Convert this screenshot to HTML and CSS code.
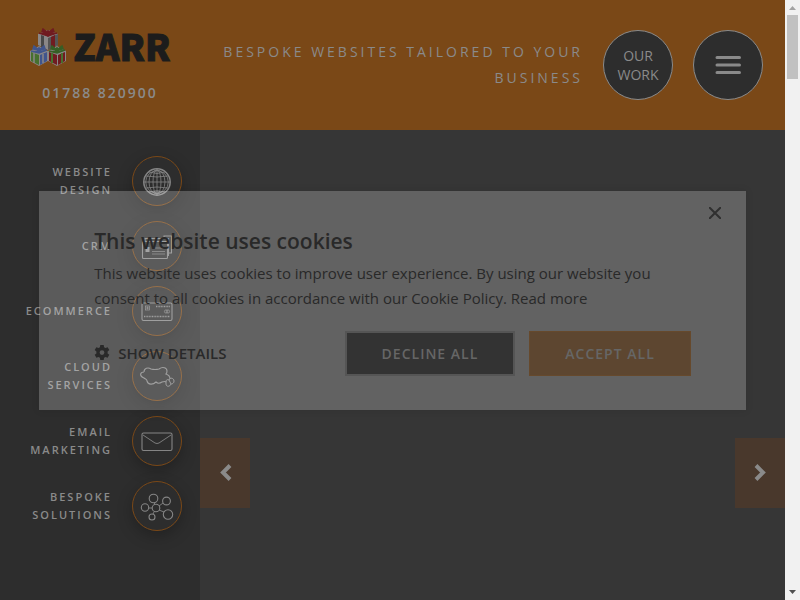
FILE: index.html
```html
<!DOCTYPE html>
<html lang="en">
<head>
  <meta charset="utf-8">
  <title>Zarr - Bespoke Websites</title>
  <link rel="stylesheet" href="styles.css">
</head>
<body>
  <div class="page">
    <header class="header">
      <div class="brand">
        <a class="logo" href="#" aria-label="Zarr home">
          <svg class="logo-gifts" width="38" height="40" viewBox="0 0 38 40">
            <!-- top box -->
            <path d="M9 6l10-4 10 4v11l-10 5-10-5z" fill="#8a8787"/>
            <path d="M19 10l10-4v11l-10 5z" fill="#555"/>
            <path d="M12 7l3 1v12l-3-1z" fill="#484848"/>
            <path d="M22 9l4-2v12l-4 2z" fill="#701b20"/>
            <path d="M10 5l9 3 9-3M19 2v7M19 5l-5-4-1 3zM19 5l5-4 1 3z" fill="#701b20" stroke="#701b20" stroke-width="1.5"/>
            <!-- left box -->
            <path d="M1 23l9-5 9 5v10l-9 5-9-5z" fill="#8a8787"/>
            <path d="M2 24l8 3v10l-8-4z" fill="#46702e"/>
            <path d="M11 27l7-3v9l-7 4z" fill="#40558c"/>
            <path d="M5 25v10M14 26v9" stroke="#8a8787" stroke-width="1.5"/>
            <path d="M2 23l8 2 8-3M10 19v6M10 22l-5-4-1 3zM10 22l5-4 1 3z" fill="#40558c" stroke="#40558c" stroke-width="1.5"/>
            <!-- right box -->
            <path d="M19 23l9-5 9 5v10l-9 5-9-5z" fill="#8a8787"/>
            <path d="M20 24l8 3v10l-8-4z" fill="#701b20"/>
            <path d="M29 27l7-3v9l-7 4z" fill="#701b20"/>
            <path d="M23 25v10M33 25v10" stroke="#46702e" stroke-width="2"/>
            <path d="M20 23l8 2 8-3M28 19v6M28 22l-5-4-1 3zM28 22l5-4 1 3z" fill="#365f25" stroke="#365f25" stroke-width="1.5"/>
          </svg>
          <span class="logo-text">ZARR</span>
        </a>
        <a class="phone" href="tel:01788820900">01788 820900</a>
      </div>
      <p class="tagline">Bespoke websites tailored to your business</p>
      <a class="round" href="#">OUR WORK</a>
      <button class="round" type="button" aria-label="Menu">
        <svg width="26" height="20" viewBox="0 0 26 20" stroke="#8a8a8a" stroke-width="3" stroke-linecap="round">
          <path d="M2 2.500h22.500M2 10h22.500M2 17.500h22.500"/>
        </svg>
      </button>
    </header>

    <div class="content">
      <nav class="sidebar">
        <a class="service" href="#">
          <span class="service-name">Website Design</span>
          <span class="service-icon">
            <svg width="36" height="36" viewBox="0 0 36 36">
              <circle cx="18" cy="19" r="13.2" stroke-width="1.5"/>
              <g stroke-width=".8">
                <circle cx="18" cy="19" r="11.3"/>
                <ellipse cx="18" cy="19" rx="8" ry="12"/>
                <ellipse cx="18" cy="19" rx="4" ry="12"/>
                <path d="M18 6v26M5 19h26M7 13q11 2 22 0M7 25q11-2 22 0M10 9q8 3 16 0M10 29q8-3 16 0"/>
              </g>
            </svg>
          </span>
        </a>
        <a class="service" href="#">
          <span class="service-name">CRM</span>
          <span class="service-icon">
            <svg width="36" height="36" viewBox="0 0 36 36">
              <rect x="3.5" y="13.5" width="25" height="17" rx="1"/>
              <path d="M6 13v-2.500h23.500v17h-1M25 10v-2h7.500v17h-3"/>
              <path d="M13 20h13M13 23.500h13M13 26h13" stroke-width=".7"/>
              <rect x="6.500" y="19" width="4" height="5" fill="#8a8a8a" stroke="none"/>
            </svg>
          </span>
        </a>
        <a class="service" href="#">
          <span class="service-name">Ecommerce</span>
          <span class="service-icon">
            <svg width="36" height="36" viewBox="0 0 36 36">
              <rect x="3" y="10" width="30" height="17.500" rx="1.500"/>
              <g stroke-width=".7">
                <rect x="6.500" y="13" width="4" height="4"/>
                <path d="M7 15h3M8.500 13.500v3"/>
                <path d="M17 13.500h14M5 23.500h26" stroke-width="1.400" stroke-dasharray="1 .6"/>
                <circle cx="27" cy="18.500" r="1.600"/><circle cx="29" cy="18.500" r="1.600"/>
              </g>
            </svg>
          </span>
        </a>
        <a class="service" href="#">
          <span class="service-name">Cloud Services</span>
          <span class="service-icon">
            <svg width="36" height="36" viewBox="0 0 36 36">
              <path d="M5 14c0-4 4-5 7-3q4 1 8 0c4-3 8-1 8 2q0 2-1 3c3 1 4 3 4 5M27 24q-1-1-4 0c-3 2-5 1-6 0-3 3-8 3-9-1 0-2-2-2-3-3-5-2-4-6 0-6"/>
              <path d="M27 24c0-2 1-3 3-2 1-3 5-2 5 1s-3 3-3 3c-1 3-5 3-5 0zM30 22l2 4" stroke-width="1"/>
            </svg>
          </span>
        </a>
        <a class="service" href="#">
          <span class="service-name">Email Marketing</span>
          <span class="service-icon">
            <svg width="36" height="36" viewBox="0 0 36 36">
              <rect x="3" y="10" width="30" height="17.500" rx="1.500"/>
              <path d="M4 12l12 8q2 1 4 0l12-8" stroke-width=".9"/>
            </svg>
          </span>
        </a>
        <a class="service" href="#">
          <span class="service-name">Bespoke Solutions</span>
          <span class="service-icon">
            <svg width="36" height="36" viewBox="0 0 36 36">
              <circle cx="14.500" cy="10.500" r="4.300"/>
              <circle cx="27.500" cy="13" r="3.900"/>
              <circle cx="6" cy="19.500" r="3.700"/>
              <circle cx="17" cy="20" r="3.800"/>
              <circle cx="29" cy="26.500" r="4.700"/>
              <circle cx="13" cy="29" r="3"/>
              <path d="M15 15l1 1M24 15l-4 3M10 20h3M20 22l5 2M15 24l-1 2" stroke-width=".9"/>
            </svg>
          </span>
        </a>
      </nav>
      <main class="slider">
        <button class="arrow" type="button" aria-label="Previous">
          <svg width="14" height="20" viewBox="0 0 14 20"><path d="M12 2.500L5 9.500l7 7"/></svg>
        </button>
        <button class="arrow" type="button" aria-label="Next">
          <svg width="14" height="20" viewBox="0 0 14 20"><path d="M3 2.500l7 7-7 7"/></svg>
        </button>
      </main>
    </div>

    <div class="overlay">
      <section class="cookies" role="dialog" aria-labelledby="cookies-title">
        <button class="close" type="button" aria-label="Close">
          <svg width="12" height="12" viewBox="0 0 12 12" stroke="#303030" stroke-width="2"><path d="M0 0l12 12M12 0L0 12"/></svg>
        </button>
        <h2 class="cookies-title" id="cookies-title">This website uses cookies</h2>
        <p class="cookies-text">This website uses cookies to improve user experience. By using our website you consent to all cookies in accordance with our Cookie Policy. <a href="#">Read more</a></p>
        <div class="cookies-actions">
          <button class="details" type="button">
            <svg width="16" height="16" viewBox="0 0 16 16">
              <path fill="#292929" fill-rule="evenodd" d="M6.300 0h3.400l.4 2.200 1.400.8 2.100-.8 1.700 2.900L13.600 6.600v1.800l1.700 1.400-1.700 3-2.100-.8-1.400.8-.4 2.200H6.300l-.4-2.200-1.400-.8-2.100.8-1.700-3 1.700-1.400V6.600L.7 5.100l1.700-2.900 2.100.8 1.400-.8zM8 5.200a2.400 2.400 0 1 0 0 4.800 2.400 2.400 0 0 0 0-4.800z"/>
            </svg>
            SHOW DETAILS
          </button>
          <button class="choice decline" type="button">DECLINE ALL</button>
          <button class="choice accept" type="button">ACCEPT ALL</button>
        </div>
      </section>
    </div>
  </div>

  <div class="scrollbar" aria-hidden="true">
    <svg width="15" height="15" viewBox="0 0 15 15"><path d="M4 10l3.500-4L11 10z" fill="#a3a3a3"/></svg>
    <div class="scrollbar-thumb"></div>
    <svg width="15" height="15" viewBox="0 0 15 15"><path d="M4 5l3.500 4L11 5z" fill="#505050"/></svg>
  </div>
</body>
</html>
```
FILE: styles.css
```css
* {
  box-sizing: border-box;
}
body {
  margin: 0;
  display: flex;
  min-height: 100vh;
  background-color: #363636;
  color: #8a8a8a;
  font-family: "Open Sans", "Noto Sans", sans-serif;
  font-size: 14px;
}
a {
  color: inherit;
  text-decoration: none;
}
button {
  font-family: inherit;
  cursor: pointer;
}
.page {
  position: relative;
  flex: 1;
  display: flex;
  flex-direction: column;
}

/* header */
.header {
  display: flex;
  align-items: center;
  gap: 20px;
  height: 130px;
  padding-right: 22px;
  background-color: #7a4817;
}
.brand {
  display: flex;
  flex-direction: column;
  align-items: center;
  gap: 16px;
  width: 200px;
}
.logo {
  display: flex;
  align-items: flex-start;
  gap: 6px;
  height: 40px;
}
.logo-text {
  color: #1c1c1c;
  font-family: "Noto Sans CJK SC", sans-serif;
  font-size: 36px;
  font-weight: 900;
  line-height: 34px;
  -webkit-text-stroke: 1px #1c1c1c;
}
.phone {
  font-weight: 600;
  line-height: 18px;
  letter-spacing: 2px;
}
.tagline {
  flex: 1;
  margin: 0;
  line-height: 26px;
  letter-spacing: 3px;
  text-align: right;
  text-transform: uppercase;
}
.round {
  display: flex;
  flex: none;
  align-items: center;
  justify-content: center;
  width: 70px;
  height: 70px;
  padding: 0;
  border: 1px solid #8a8a8a;
  border-radius: 50%;
  background-color: #2d2d2d;
  line-height: 19px;
  text-align: center;
}

/* services */
.content {
  flex: 1;
  display: flex;
}
.sidebar {
  display: flex;
  flex-direction: column;
  gap: 15px;
  width: 200px;
  padding: 26px 18px 0 0;
  background-color: #2d2d2d;
}
.service {
  display: flex;
  align-items: center;
  justify-content: flex-end;
  gap: 20px;
}
.service-name {
  width: 100px;
  font-size: 11px;
  font-weight: 600;
  line-height: 18px;
  letter-spacing: 2px;
  text-align: right;
  text-transform: uppercase;
}
.service-icon {
  display: flex;
  align-items: center;
  justify-content: center;
  width: 50px;
  height: 50px;
  border: 1px solid #7a4817;
  border-radius: 50%;
  box-shadow: 0 5px 15px rgba(0, 0, 0, 0.25);
}
.service-icon svg {
  fill: none;
  stroke: #858585;
  stroke-width: 1.1;
}

/* slider */
.slider {
  flex: 1;
  display: flex;
  align-items: flex-start;
  justify-content: space-between;
  padding-top: 308px;
}
.arrow {
  display: flex;
  align-items: center;
  justify-content: center;
  width: 50px;
  height: 70px;
  border: 0;
  background-color: #49382c;
}
.arrow svg {
  fill: none;
  stroke: #8a8a8a;
  stroke-width: 4;
}

/* cookie dialog */
.overlay {
  position: absolute;
  inset: 0;
  display: flex;
  align-items: center;
  justify-content: center;
}
.cookies {
  position: relative;
  width: 90%;
  padding: 35px 55px 34px;
  background-color: rgba(255, 255, 255, 0.22);
  box-shadow: 0 0 8px rgba(0, 0, 0, 0.1);
  color: #292929;
}
.close {
  position: absolute;
  top: 10px;
  right: 19px;
  display: flex;
  padding: 6px;
  border: 0;
  background: none;
}
.cookies-title {
  margin: 0 0 5px;
  font-size: 21px;
  font-weight: 600;
  line-height: 30px;
}
.cookies-text {
  margin: 0 0 20px;
  font-size: 15px;
  line-height: 25px;
}
.cookies-actions {
  display: flex;
  align-items: center;
  gap: 14px;
}
.details {
  display: flex;
  align-items: center;
  gap: 8px;
  margin-right: auto;
  padding: 0;
  border: 0;
  background: none;
  color: #292929;
  font-size: 15px;
  font-weight: 600;
}
.choice {
  height: 45px;
  padding: 0 35px;
  border: 2px solid #555;
  font-size: 14px;
  font-weight: 600;
  letter-spacing: 1px;
  color: #666;
}
.decline {
  background-color: #333;
}
.accept {
  border: 1px solid #66492c;
  background-color: #5d4630;
}

/* scrollbar */
.scrollbar {
  display: flex;
  flex-direction: column;
  align-items: center;
  width: 15px;
  background-color: #f1f1f1;
}
.scrollbar-thumb {
  width: 11px;
  height: 64px;
  margin-bottom: auto;
  background-color: #c1c1c1;
}
```
